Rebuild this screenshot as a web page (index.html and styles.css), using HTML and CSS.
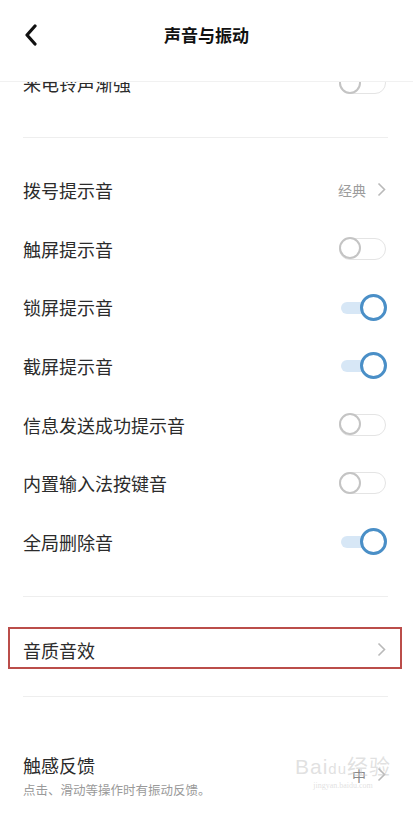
FILE: index.html
```html
<!DOCTYPE html>
<html lang="zh-CN">
<head>
<meta charset="utf-8">
<title>声音与振动</title>
<link rel="stylesheet" href="styles.css">
</head>
<body>
<div class="screen">
  <header class="topbar">
    <span class="back">
      <svg width="14" height="22" viewBox="0 0 14 22"><path d="M11 2 L3 11 L11 20" fill="none" stroke="#111" stroke-width="3.2" stroke-linecap="round" stroke-linejoin="round"/></svg>
    </span>
    <h1 class="title">声音与振动</h1>
  </header>

  <main class="scroller">
    <div class="list">
      <section class="group group-first">
        <div class="row"><span class="label">来电铃声渐强</span><span class="switch"><span class="knob"></span></span></div>
      </section>
      <div class="divider"></div>

      <section class="group group-main">
        <div class="row"><span class="label">拨号提示音</span><span class="value">经典<svg class="chev" width="9" height="15" viewBox="0 0 9 15"><path d="M1.5 1.5 L7.5 7.5 L1.5 13.5" fill="none" stroke="#b9b9b9" stroke-width="1.6"/></svg></span></div>
        <div class="row"><span class="label">触屏提示音</span><span class="switch"><span class="knob"></span></span></div>
        <div class="row"><span class="label">锁屏提示音</span><span class="switch on"><span class="knob"></span></span></div>
        <div class="row"><span class="label">截屏提示音</span><span class="switch on"><span class="knob"></span></span></div>
        <div class="row"><span class="label">信息发送成功提示音</span><span class="switch"><span class="knob"></span></span></div>
        <div class="row"><span class="label">内置输入法按键音</span><span class="switch"><span class="knob"></span></span></div>
        <div class="row"><span class="label">全局删除音</span><span class="switch on"><span class="knob"></span></span></div>
      </section>
      <div class="divider"></div>

      <section class="group group-sound">
        <div class="row row-marked"><span class="label">音质音效</span><span class="value"><svg class="chev" width="9" height="15" viewBox="0 0 9 15"><path d="M1.5 1.5 L7.5 7.5 L1.5 13.5" fill="none" stroke="#b9b9b9" stroke-width="1.6"/></svg></span><span class="mark"></span></div>
      </section>
      <div class="divider"></div>

      <section class="group group-haptic">
        <div class="row row-two">
          <div class="texts">
            <span class="label">触感反馈</span>
            <span class="desc">点击、滑动等操作时有振动反馈。</span>
          </div>
          <span class="value">中<svg class="chev" width="9" height="15" viewBox="0 0 9 15"><path d="M1.5 1.5 L7.5 7.5 L1.5 13.5" fill="none" stroke="#b9b9b9" stroke-width="1.6"/></svg></span>
          <span class="stamp"><span class="stamp-name">Bai<b>du</b>经验</span><span class="stamp-url">jingyan.baidu.com</span></span>
        </div>
      </section>
    </div>
  </main>
</div>
</body>
</html>
```

FILE: styles.css
```css
* { box-sizing: border-box; }

html, body {
  margin: 0;
  padding: 0;
  background: #fff;
}

body {
  font-family: "Noto Sans CJK SC", "Noto Sans", sans-serif;
  color: #2b2b2b;
}

.screen {
  width: 413px;
  height: 815px;
  overflow: hidden;
  display: flex;
  flex-direction: column;
}

/* top bar */
.topbar {
  height: 82px;
  flex: none;
  display: flex;
  align-items: flex-start;
  padding-top: 18px;
  border-bottom: 1px solid #f1f1f1;
  position: relative;
}

.back {
  width: 14px;
  height: 34px;
  margin-left: 24px;
  display: flex;
  align-items: center;
}

.title {
  margin: 0;
  position: absolute;
  left: 0;
  right: 0;
  top: 18px;
  height: 34px;
  line-height: 34px;
  text-align: center;
  font-size: 17px;
  font-weight: 700;
  color: #111;
  pointer-events: none;
}

/* scrolled list */
.scroller {
  flex: 1;
  overflow: hidden;
}

.list {
  margin-top: -28px;
}

.group-first { padding-bottom: 24px; }
.group-main { padding: 23px 0 25px; }
.group-sound { padding: 23px 0 17px; }
.group-haptic { padding: 56px 0 0; }

.divider {
  height: 1px;
  margin: 0 25px 0 23px;
  background: #eeeeee;
}

.row {
  height: 58.67px;
  padding: 0 27px 0 23px;
  display: flex;
  align-items: center;
  justify-content: space-between;
  position: relative;
}

.label {
  font-size: 18px;
  line-height: 24px;
  color: #2b2b2b;
}

.value {
  display: flex;
  align-items: center;
  gap: 11px;
  font-size: 14px;
  color: #9c9c9c;
}

.chev { display: block; }

/* switches */
.switch {
  width: 47px;
  height: 22px;
  border: 1.5px solid #e4e4e4;
  border-radius: 11px;
  position: relative;
}

.switch .knob {
  position: absolute;
  left: -1.5px;
  top: -1.5px;
  width: 22px;
  height: 22px;
  border-radius: 50%;
  border: 2px solid #c4c4c4;
  background: #fff;
}

.switch.on {
  border: 0;
  height: 27px;
  display: flex;
  align-items: center;
  justify-content: flex-end;
}

.switch.on::before {
  content: "";
  position: absolute;
  left: 2px;
  top: 8px;
  width: 26px;
  height: 12px;
  border-radius: 6px;
  background: #d7e7f6;
}

.switch.on .knob {
  left: auto;
  right: -1px;
  top: 0;
  width: 27px;
  height: 27px;
  border: 3px solid #4a8fc7;
}

/* annotation box around the sound quality row */
.mark {
  position: absolute;
  left: 8px;
  right: 11px;
  top: 7px;
  height: 42px;
  border: 2px solid #bb4d4a;
  pointer-events: none;
}

/* haptic row with description */
.row-two {
  height: 50px;
  align-items: flex-start;
}

.texts {
  display: flex;
  flex-direction: column;
}

.desc {
  font-size: 12.5px;
  line-height: 20px;
  margin-top: 3px;
  color: #9a9a9a;
}

.row-two .value {
  margin-top: 12px;
  color: #888;
}

/* faint watermark stamp */
.stamp {
  position: absolute;
  left: 295px;
  top: 2px;
  display: flex;
  flex-direction: column;
  align-items: center;
  color: rgba(195, 195, 195, 0.5);
  pointer-events: none;
}

.stamp-name {
  font-family: "Liberation Sans", sans-serif;
  font-size: 21px;
  line-height: 24px;
  letter-spacing: 1px;
}

.stamp-name b {
  font-weight: 400;
  font-size: 15px;
}

.stamp-url {
  font-family: "Liberation Serif", serif;
  font-size: 8px;
  line-height: 10px;
}
```
